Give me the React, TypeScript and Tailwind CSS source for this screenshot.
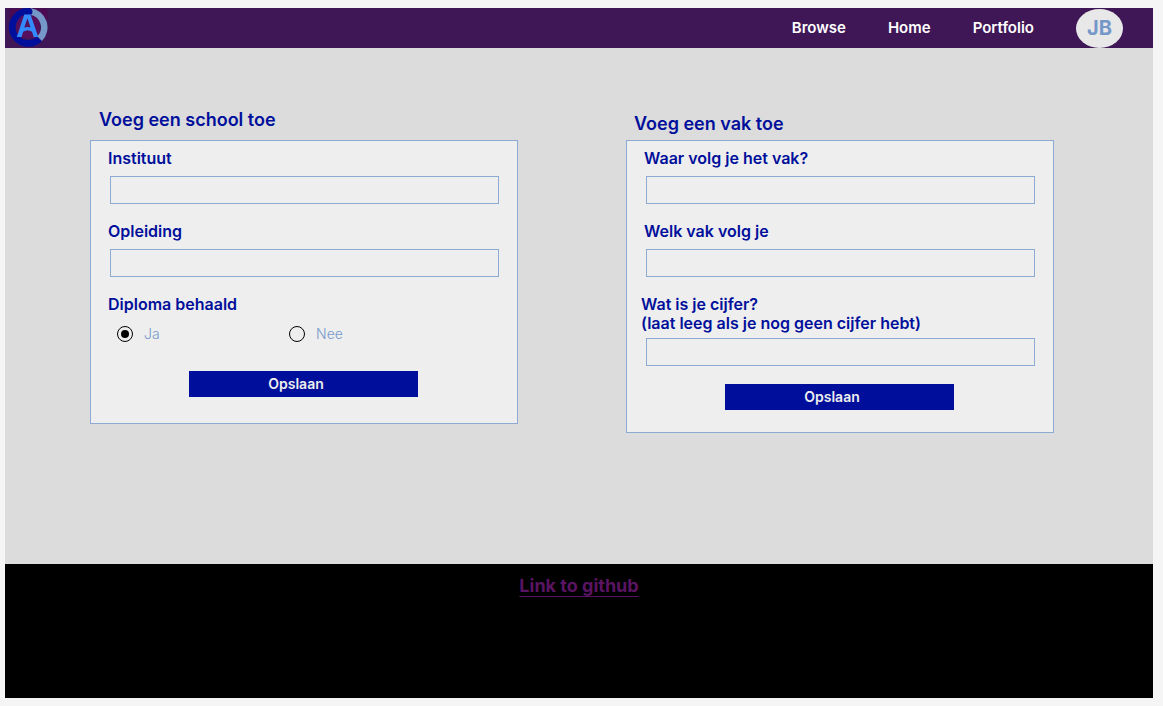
import type { ReactNode } from "react";

function Logo() {
  return (
    <svg viewBox="0 0 40 40" className="size-10" role="img" aria-label="Logo">
      <rect x="1.500" y="0.500" width="38" height="10.500" fill="#4b0b52" />
      <rect x="8.500" y="8" width="23" height="22" fill="#560f5c" />
      <path d="M31.600 30.600A16 16 0 1 1 21.500 3.350" fill="none" stroke="#000f9b" strokeWidth="6.600" />
      <path d="M22.500 3.500A16 16 0 0 1 31.600 30.600" fill="none" stroke="#7598c9" strokeWidth="6.600" />
      <circle cx="21.300" cy="3.700" r="3.200" fill="#000f9b" />
      <path
        d="M16.300 6.500h6.200L30.300 29h-4.600l-1.700-5.200Q19.500 20.800 15.200 23.800L13.500 29H8.800ZM19.400 10.200 16.300 19.600Q19.500 18.600 22.600 19.600Z"
        fill="#338aff"
        fillRule="evenodd"
      />
    </svg>
  );
}

type FieldProps = { id: string; hint?: string; children: ReactNode };

function Field({ id, hint, children }: FieldProps) {
  return (
    <div className="mb-[18px]">
      <label
        htmlFor={id}
        className={`block text-base leading-[19px] font-semibold ${hint ? "-ml-[3px] mb-[5px]" : "mb-2"}`}
      >
        {children}
        {hint && <span className="block">{hint}</span>}
      </label>
      <input
        id={id}
        type="text"
        className="ml-0.5 block h-7 w-[calc(100%-2px)] border border-[#8dabd2] bg-transparent px-2 text-[#7598c9] outline-none"
      />
    </div>
  );
}

function Choice({ label, checked }: { label: string; checked?: boolean }) {
  return (
    <label className="flex w-[172px] items-center gap-[11px] text-sm leading-5 font-light text-[#7598c9]">
      <input
        type="radio"
        name="diploma"
        defaultChecked={checked}
        className="size-4 appearance-none rounded-full border border-black bg-clip-content p-[3px] checked:bg-black"
      />
      {label}
    </label>
  );
}

function SaveButton() {
  return (
    <button
      type="submit"
      className="mx-auto block h-[26px] w-[229px] bg-[#000f9b] pr-[15px] text-sm font-semibold text-[#eeeeee]"
    >
      Opslaan
    </button>
  );
}

const card = "border border-[#8dabd2] bg-[#eeeeee] pt-2 pr-[18px] pl-[17px]";

export default function App() {
  return (
    <div className="flex min-h-screen flex-col bg-[#f5f5f5] py-2 pr-2.5 pl-[5px] font-['Inter',sans-serif] text-[#000f9b]">
      <header className="flex h-10 items-center justify-between bg-[#3f1757] pr-[30px] pl-[3px]">
        <a href="#top">
          <Logo />
        </a>
        <nav className="flex items-center gap-[42px] text-[15px] font-semibold text-white">
          <a href="#browse">Browse</a>
          <a href="#home">Home</a>
          <a href="#portfolio">Portfolio</a>
          <a
            href="#profile"
            className="flex h-[39px] w-[47px] items-center justify-center rounded-[50%] bg-[#e8e8e8] text-xl font-bold text-[#7598c9]"
          >
            JB
          </a>
        </nav>
      </header>

      <main className="grid grow grid-cols-2 items-start gap-[108px] bg-[#dcdcdc] pt-[60px] pr-[99px] pb-10 pl-[85px]">
        <section>
          <h2 className="mb-2 pl-[9px] text-lg leading-6 font-semibold">Voeg een school toe</h2>
          <form className={`${card} pb-[26px]`}>
            <Field id="instituut">Instituut</Field>
            <Field id="opleiding">Opleiding</Field>
            <fieldset className="mb-[27px]">
              <legend className="mb-2.5 text-base leading-[19px] font-semibold">Diploma behaald</legend>
              <div className="flex pl-[9px]">
                <Choice label="Ja" checked />
                <Choice label="Nee" />
              </div>
            </fieldset>
            <SaveButton />
          </form>
        </section>

        <section className="pt-1">
          <h2 className="mb-1 pl-2 text-lg leading-6 font-semibold">Voeg een vak toe</h2>
          <form className={`${card} pb-[22px]`}>
            <Field id="school">Waar volg je het vak?</Field>
            <Field id="vak">Welk vak volg je</Field>
            <Field id="cijfer" hint="(laat leeg als je nog geen cijfer hebt)">
              Wat is je cijfer?
            </Field>
            <SaveButton />
          </form>
        </section>
      </main>

      <footer className="h-[134px] bg-black pt-2.5 text-center">
        <a
          href="#github"
          className="text-lg leading-6 font-bold text-[#5b1463] underline decoration-1 underline-offset-4"
        >
          Link to github
        </a>
      </footer>
    </div>
  );
}
